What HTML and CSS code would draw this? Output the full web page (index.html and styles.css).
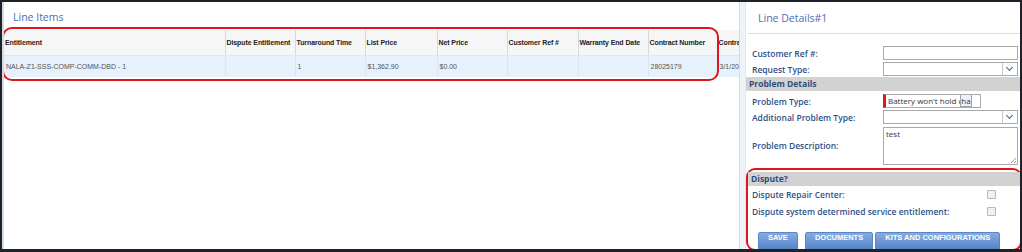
FILE: index.html
```html
<!doctype html>
<html lang="en">
<head>
	<meta charset="UTF-8" />
	<title>Line Items</title>
	<link rel="stylesheet" href="styles.css">
</head>
<body>
	<div class="frame">
		<div class="items">
			<h2 class="ttl ttl-items">Line Items</h2>
			<div class="grid-wrap">
				<table class="grid">
					<colgroup>
						<col class="c1"><col class="c2"><col class="c3"><col class="c4"><col class="c5"><col class="c6"><col class="c7"><col class="c8"><col class="c9">
					</colgroup>
					<tr class="hd">
						<th>Entitlement</th>
						<th>Dispute Entitlement</th>
						<th>Turnaround Time</th>
						<th>List Price</th>
						<th>Net Price</th>
						<th>Customer Ref #</th>
						<th>Warranty End Date</th>
						<th>Contract Number</th>
						<th>Contract Start</th>
					</tr>
					<tr class="row">
						<td>NALA-Z1-SSS-COMP-COMM-DBD - 1</td>
						<td></td>
						<td>1</td>
						<td>$1,362.90</td>
						<td>$0.00</td>
						<td></td>
						<td></td>
						<td>28025179</td>
						<td>3/1/2014</td>
					</tr>
				</table>
				<div class="mark mark-grid"></div>
			</div>
		</div>
		<div class="sep"></div>
		<div class="details">
			<h2 class="ttl ttl-det">Line Details#1</h2>
			<div class="form form-top">
				<div class="frow">
					<label>Customer Ref #:</label>
					<span class="inp"></span>
				</div>
				<div class="frow">
					<label>Request Type:</label>
					<span class="inp sel"><i class="arr"></i></span>
				</div>
			</div>
			<div class="bar">Problem Details</div>
			<div class="form">
				<div class="frow">
					<label>Problem Type:</label>
					<span class="inp req">Battery won't hold c<b class="ico">ha</b></span>
				</div>
				<div class="frow">
					<label>Additional Problem Type:</label>
					<span class="inp sel"><i class="arr"></i></span>
				</div>
				<div class="frow frow-tall">
					<label>Problem Description:</label>
					<span class="inp area">test<i class="grip"></i></span>
				</div>
			</div>
			<div class="dispute">
				<div class="bar bar-in">Dispute?</div>
				<div class="crow">
					<label>Dispute Repair Center:</label>
					<span class="chk"></span>
				</div>
				<div class="crow">
					<label>Dispute system determined service entitlement:</label>
					<span class="chk"></span>
				</div>
				<div class="btns">
					<a class="btn btn-save">SAVE</a>
					<a class="btn">DOCUMENTS</a>
					<a class="btn">KITS AND CONFIGURATIONS</a>
				</div>
			</div>
		</div>
	</div>
</body>
</html>
```
FILE: styles.css
```css
body{margin: 0;padding: 0;background: #fff;}

.frame{height: 252px;box-sizing: border-box;border: 2px solid #1e2126;border-bottom-width: 3px;display: flex;overflow: hidden;background: #fff;}

.ttl{margin: 0;font: 400 10.5px/14px "Open Sans", sans-serif;color: #4a6db3;}

/* line items */
.items{width: 737px;flex: none;overflow: hidden;border-left: 2px solid #d4dbe4;box-sizing: border-box;}
.ttl-items{padding: 8px 0 0 9px;height: 17px;}
.grid-wrap{position: relative;padding-top: 3px;}
.grid{border-collapse: collapse;table-layout: fixed;width: 773px;font-family: "Liberation Sans", Arial, sans-serif;font-size: 7px;}
.grid th{background: #f6f6f6;height: 25px;text-align: left;font-weight: 700;color: #222;padding: 0 0 0 1px;border-left: 1px solid #d8d8d8;border-bottom: 1px solid #e6e6e6;white-space: nowrap;overflow: hidden;letter-spacing: -0.1px;}
.grid th:first-child{border-left: 0;}
.grid td{background: #e6f1fb;height: 21px;color: #555;padding: 0 0 0 2px;border-left: 1px solid #d9e6f2;white-space: nowrap;overflow: hidden;}
.grid td:first-child{border-left: 0;}
.c1{width: 221px;}
.c2{width: 70px;}
.c3{width: 70px;}
.c4{width: 72px;}
.c5{width: 70px;}
.c6{width: 71px;}
.c7{width: 70px;}
.c8{width: 69px;}
.c9{width: 60px;}

.mark{position: absolute;border: 2px solid #e0151d;border-radius: 10px;}
.mark-grid{left: -2px;top: 0;width: 713px;height: 50px;}

.sep{width: 5px;flex: none;background: #eef3f8;border-left: 1px solid #d2dce8;border-right: 1px solid #e2e8ef;}

/* line details */
.details{flex: 1;position: relative;font: 600 8.5px/11px "Open Sans", sans-serif;color: #2d5186;}
.ttl-det{padding: 9px 0 0 10px;height: 22px;border-bottom: 1px solid #dcdcdc;margin-left: 2px;}
.form{padding: 0 4px 0 6px;}
.form-top{padding-top: 11px;}
.frow{display: flex;align-items: center;height: 16px;}
.frow label{width: 131px;flex: none;white-space: nowrap;}
.inp{display: block;position: relative;width: 131px;height: 12px;border: 1px solid #a9a9a9;background: #fff;font: 400 8px "Open Sans", sans-serif;color: #333;line-height: 12px;padding-left: 2px;box-sizing: content-box;}
.sel .arr{position: absolute;right: 0;top: 0;width: 14px;height: 12px;border-left: 1px solid #c8c8c8;}
.sel .arr:after{content: "";position: absolute;left: 4px;top: 2px;width: 4px;height: 4px;border-right: 1.5px solid #3a5f9a;border-bottom: 1.5px solid #3a5f9a;transform: rotate(45deg);}
.req{width: 92px;border-left: 3px solid #e0151d;white-space: nowrap;overflow: hidden;}
.ico{font-weight: 400;border: 1px solid #9aa;background: #eef;margin-left: -2px;}
.frow-tall{height: 41px;}
.area{height: 36px;line-height: 11px;}
.grip{position: absolute;right: 1px;bottom: 1px;width: 5px;height: 5px;background: linear-gradient(135deg, transparent 45%, #999 45%, #999 55%, transparent 55%, transparent 70%, #999 70%, #999 80%, transparent 80%);}

.bar{background: #d2d2d2;height: 14px;line-height: 14px;padding-left: 3px;font-weight: 700;color: #2d4d7c;margin: 0 0 2px;}

.dispute{position: absolute;left: 0;right: 0;top: 166px;bottom: -2px;border: 2px solid #e0151d;border-radius: 9px;}
.bar-in{margin: 2px 0 0;}
.crow{display: flex;align-items: center;justify-content: space-between;height: 17px;padding: 0 24px 0 4px;white-space: nowrap;}
.chk{width: 7px;height: 7px;border: 1px solid #b8b8b8;border-radius: 1px;background: #f0f0f0;}
.btns{display: flex;gap: 2px;padding: 12px 0 0 10px;}
.btn{display: block;height: 18px;line-height: 18px;padding: 0 9px;font: 700 7.5px "Liberation Sans", Arial, sans-serif;color: #fff;background: linear-gradient(#86acdf, #4f80c6);border: 1px solid #5a86c5;border-radius: 2px 2px 0 0;}
.btn-save{margin-right: 5px;}
```
